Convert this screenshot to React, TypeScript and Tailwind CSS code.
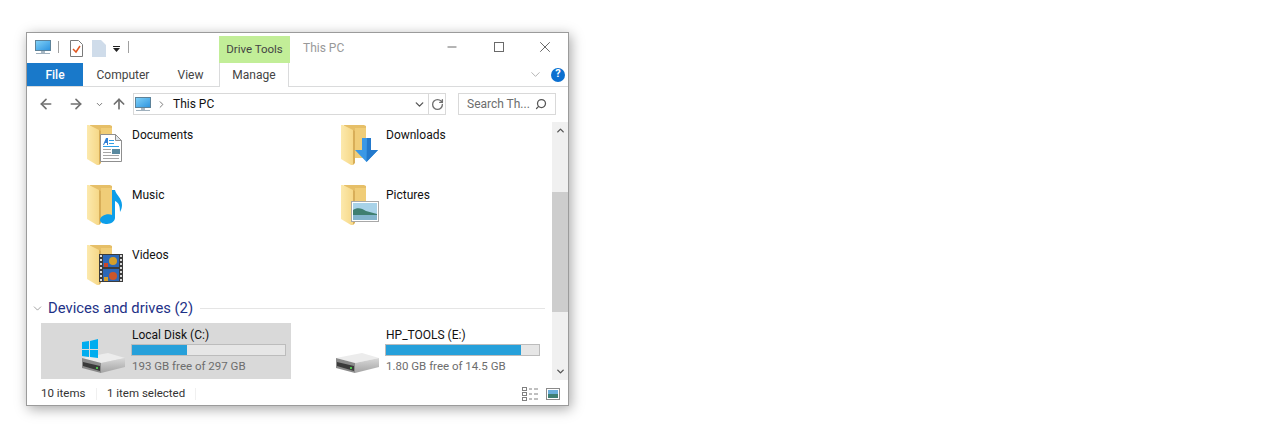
import { ChevronDown, ChevronUp, ChevronRight, ArrowLeft, ArrowRight, ArrowUp, RotateCw, Search, Minus, X } from 'lucide-react'
import type { ReactNode } from 'react'

function Monitor({ id }: { id: string }) {
  return (
    <svg width="16" height="15" viewBox="0 0 16 15" className="shrink-0">
      <defs>
        <linearGradient id={id} x1="0" y1="0" x2="1" y2="1">
          <stop offset="0" stopColor="#7fd0f7" />
          <stop offset="1" stopColor="#2f95e0" />
        </linearGradient>
      </defs>
      <rect x="0" y="0" width="16" height="11" fill="#5d8299" />
      <rect x="1" y="1" width="14" height="9" fill={`url(#${id})`} />
      <rect x="6" y="11" width="4" height="2" fill="#a9b8c4" />
      <rect x="1" y="13" width="14" height="1" fill="#9fb0bd" />
    </svg>
  )
}

function Folder({ children }: { children?: ReactNode }) {
  return (
    <svg width="44" height="44" viewBox="0 0 44 44" className="shrink-0">
      <defs>
        <linearGradient id="flap" x1="0" y1="0" x2="1" y2="0">
          <stop offset="0" stopColor="#fce9ad" />
          <stop offset="1" stopColor="#f6d888" />
        </linearGradient>
      </defs>
      <path d="M3 0h20l2 1v32H3z" fill="#e6bf68" />
      <path d="M14 3h11v30H14z" fill="#f0cd78" />
      <path d="M0 0h2l10 5v35l-2 0-10-6z" fill="url(#flap)" />
      <path d="M12 5v35l2-2V6z" fill="#d8ae58" />
      {children}
    </svg>
  )
}

function Documents() {
  return (
    <g>
      <path d="M13.500 9.500h15l6 6v21h-21z" fill="#fff" stroke="#8f8f8f" />
      <path d="M28.500 9.500v6h6z" fill="#dfe6ec" stroke="#8f8f8f" />
      <path d="M16 20l3-7h2v7h-1v-2h-2l-1 2z" fill="#2f7fd6" />
      <rect x="22" y="15" width="5" height="1" fill="#2e9fe6" />
      <rect x="22" y="18" width="5" height="1" fill="#2e9fe6" />
      <rect x="16" y="21" width="16" height="1" fill="#2e9fe6" />
      <rect x="16" y="24" width="8" height="1" fill="#a6a6a6" />
      <rect x="16" y="27" width="8" height="1" fill="#a6a6a6" />
      <rect x="16" y="30" width="16" height="1" fill="#a6a6a6" />
      <rect x="16" y="33" width="16" height="1" fill="#a6a6a6" />
      <rect x="25" y="24" width="8" height="5" fill="#5a8aa0" />
    </g>
  )
}

function Music() {
  return (
    <path
      d="M25 5h3c1 5 7 8 7 15 0 3-1 5-2 7 0-6-1-9-5-11v17c0 3-4 6-8 6-3 0-7-1-7-4 0-4 7-7 12-5z"
      fill="#0d9ee9"
    />
  )
}

function Down() {
  return (
    <g>
      <path d="M21 13h9v12h7L25.500 37 14 25h7z" fill="#3a98e6" />
      <path d="M26 13h4v12h7L25.500 37z" fill="#2379cc" />
    </g>
  )
}

function Picture() {
  return (
    <g>
      <rect x="10.500" y="16.500" width="27" height="20" fill="#fff" stroke="#a8a8a8" />
      <rect x="12" y="18" width="24" height="17" fill="#a8d2e8" />
      <path d="M12 25c4-3 9-2 13 1l11 3v2H12z" fill="#3f7f70" />
      <path d="M12 30h24v5H12z" fill="#82b4cc" />
    </g>
  )
}

function Film() {
  return (
    <g>
      <rect x="12" y="9" width="24" height="28" fill="#3c3c3c" />
      {[10, 14, 18, 22, 26, 30, 34].map((y) => (
        <g key={y}>
          <rect x="13" y={y} width="2" height="2" fill="#d8d8d8" />
          <rect x="33" y={y} width="2" height="2" fill="#d8d8d8" />
        </g>
      ))}
      <rect x="16" y="10" width="16" height="12" fill="#2c68b8" />
      <rect x="16" y="24" width="16" height="12" fill="#2c68b8" />
      <circle cx="26" cy="16" r="4" fill="#d6a02a" />
      <circle cx="26" cy="31" r="4" fill="#c9562a" />
      <rect x="17" y="18" width="4" height="4" fill="#c9462a" />
      <rect x="17" y="32" width="4" height="4" fill="#d6a02a" />
    </g>
  )
}

function Drive({ windows, id }: { windows?: boolean; id: string }) {
  return (
    <svg width="46" height="36" viewBox="0 0 46 36" className="shrink-0">
      <defs>
        <linearGradient id={id} x1="0" y1="0" x2="0" y2="1">
          <stop offset="0" stopColor="#d8d8d8" />
          <stop offset="1" stopColor="#a4a4a4" />
        </linearGradient>
      </defs>
      <path d="M1 19l26-5 17 5-24 5z" fill="#ececec" />
      <path d="M20 24l24-5v9l-24 6z" fill={`url(#${id})`} />
      <path d="M1 19l19 5v10L1 29z" fill="#8a8a8a" />
      <path d="M2 23l17 4v5L2 27z" fill="#3a3a3a" />
      <rect x="15" y="28" width="2" height="2" fill="#4fc24f" />
      {windows && (
        <g fill="#00adef">
          <path d="M1 3l7-1v8H1z" />
          <path d="M9 2l8-2v10H9z" />
          <path d="M1 11h7v7l-7-1z" />
          <path d="M9 11h8v8l-8-1z" />
        </g>
      )}
    </svg>
  )
}

function LibItem({ label, children }: { label: string; children: ReactNode }) {
  return (
    <div className="flex h-[60px] w-[254px] items-start pl-[46px] pt-px">
      <Folder>{children}</Folder>
      <span className="ml-[1px] mt-[1px] text-[#111]">{label}</span>
    </div>
  )
}

function DriveTile({
  label,
  free,
  pct,
  selected,
  windows,
  id,
}: {
  label: string
  free: string
  pct: number
  selected?: boolean
  windows?: boolean
  id: string
}) {
  return (
    <div className={`flex h-[56px] w-[250px] items-start ${selected ? 'bg-[#d9d9d9]' : ''}`}>
      <div className="ml-[40px] mt-[16px] w-[49px]">
        <Drive windows={windows} id={id} />
      </div>
      <div className="ml-[1px] flex w-[155px] flex-col">
        <span className="ml-px mt-[3px] h-[18px] leading-[18px] text-[#111]">{label}</span>
        <div className="h-[12px] w-[155px] border border-[#bcbcbc] bg-[#e6e6e6]">
          <div className="h-full bg-[#26a0da]" style={{ width: `${pct}%` }} />
        </div>
        <span className="ml-px mt-[1px] text-[11.5px] leading-[18px] text-[#6d6d6d]">{free}</span>
      </div>
    </div>
  )
}

export default function App() {
  return (
    <div className="h-[447px] w-[1267px] overflow-hidden bg-white pl-[26px] pt-[32px] font-['Roboto',sans-serif] text-[12px]">
      <div className="flex h-[374px] w-[543px] flex-col border border-[#9b9b9b] bg-white shadow-[2px_3px_12px_rgba(0,0,0,0.35)]">
        {/* title bar */}
        <div className="flex h-[30px] shrink-0 items-start">
          <div className="ml-[8px] mt-[7px] flex items-start">
            <Monitor id="scr1" />
            <span className="ml-[7px] mt-[1px] h-[12px] w-px bg-[#a0a0a0]" />
            <svg width="13" height="17" viewBox="0 0 13 17" className="ml-[11px]">
              <path d="M0.500 0.500h8l4 4v12h-12z" fill="#fff" stroke="#7a7a7a" />
              <path d="M3 9l3 3 4-6" fill="none" stroke="#e0561f" strokeWidth="1.500" />
            </svg>
            <svg width="14" height="17" viewBox="0 0 14 17" className="ml-[9px]">
              <path d="M0 0h9l5 5v12H0z" fill="#cfdcea" />
            </svg>
            <svg width="8" height="7" viewBox="0 0 8 7" className="ml-[7px] mt-[6px]">
              <rect y="0" width="7" height="1" fill="#222" />
              <path d="M0 2h7L3.500 6z" fill="#222" />
            </svg>
            <span className="ml-[7px] mt-[1px] h-[12px] w-px bg-[#a0a0a0]" />
          </div>
          <div className="ml-[90px] mt-[3px] flex h-[27px] w-[71px] items-center justify-center bg-[#c2ee98] pt-px text-[11.5px] text-[#444]">
            Drive Tools
          </div>
          <span className="ml-[13px] mt-[6px] text-[#999]">This PC</span>
          <div className="ml-auto flex items-start text-[#6a6a6a]">
            <div className="mr-[23px] mt-[7px] flex w-[24px] justify-center">
              <Minus size={14} strokeWidth={1} absoluteStrokeWidth />
            </div>
            <div className="mr-[22px] mt-[9px] flex w-[24px] justify-center">
              <div className="h-[10px] w-[10px] border border-[#6a6a6a]" />
            </div>
            <div className="mr-[11px] mt-[5px] flex w-[24px] justify-center">
              <X size={18} strokeWidth={1} absoluteStrokeWidth />
            </div>
          </div>
        </div>

        {/* ribbon tabs */}
        <div className="flex h-[24px] shrink-0 items-stretch border-b border-[#dadbdc]">
          <div className="flex w-[56px] items-center justify-center bg-[#1979ca] font-medium text-white">File</div>
          <div className="flex w-[80px] items-center justify-center text-[#444]">Computer</div>
          <div className="flex w-[53px] items-center justify-center pl-[2px] text-[#444]">View</div>
          <div className="-mb-px ml-[3px] flex w-[70px] items-center justify-center border-x border-[#dadbdc] bg-white text-[#444]">
            Manage
          </div>
          <div className="ml-auto mr-[3px] flex items-center gap-[8px]">
            <ChevronDown size={15} strokeWidth={1} className="text-[#888]" />
            <div className="flex h-[14px] w-[14px] items-center justify-center rounded-full bg-[#0a6fd0] text-[11px] font-bold text-white">
              ?
            </div>
          </div>
        </div>

        {/* address row */}
        <div className="flex h-[35px] shrink-0 items-center pb-[1px] text-[#707070]">
          <ArrowLeft size={16} strokeWidth={2.500} className="ml-[11px]" />
          <ArrowRight size={16} strokeWidth={2.500} className="ml-[14px]" />
          <ChevronDown size={9} strokeWidth={2.500} className="ml-[11px]" />
          <ArrowUp size={16} strokeWidth={2.500} className="ml-[7px]" />
          <div className="ml-[6px] flex h-[22px] w-[313px] items-center border border-[#d9d9d9] pl-px">
            <Monitor id="scr2" />
            <ChevronRight size={11} strokeWidth={2} className="ml-[5px]" />
            <span className="ml-[6px] text-[#111]">This PC</span>
            <ChevronDown size={13} strokeWidth={2.500} className="ml-auto mr-[2px] text-[#555]" />
            <div className="flex h-full w-[17px] items-center justify-center border-l border-[#d9d9d9]">
              <RotateCw size={13} strokeWidth={2.500} />
            </div>
          </div>
          <div className="ml-[12px] flex h-[22px] w-[98px] items-center justify-between border border-[#d9d9d9] pl-[8px] pr-[8px] text-[#6d6d6d]">
            <span>Search Th...</span>
            <Search size={12} strokeWidth={2.500} className="-scale-x-100 text-[#555]" />
          </div>
        </div>

        {/* content */}
        <div className="flex min-h-0 flex-1">
          <div className="min-w-0 flex-1 overflow-hidden pl-[14px] pt-[2px]">
            <div className="flex flex-wrap">
              <LibItem label="Documents"><Documents /></LibItem>
              <LibItem label="Downloads"><Down /></LibItem>
              <LibItem label="Music"><Music /></LibItem>
              <LibItem label="Pictures"><Picture /></LibItem>
              <LibItem label="Videos"><Film /></LibItem>
            </div>
            <div className="-ml-[10px] -mt-[6px] flex h-[20px] items-center">
              <ChevronDown size={13} strokeWidth={1} className="text-[#555]" />
              <span className="ml-[4px] whitespace-nowrap text-[14.8px] text-[#1e3287]">Devices and drives (2)</span>
              <span className="ml-[7px] mr-[7px] h-px flex-1 bg-[#e5e5e5]" />
            </div>
            <div className="mt-[5px] flex gap-[4px]">
              <DriveTile label="Local Disk (C:)" free="193 GB free of 297 GB" pct={36} selected windows id="dr1" />
              <DriveTile label="HP_TOOLS (E:)" free="1.80 GB free of 14.5 GB" pct={88} id="dr2" />
            </div>
          </div>
          <div className="flex w-[16px] shrink-0 flex-col bg-[#f0f0f0] text-[#555]">
            <div className="flex h-[17px] items-center justify-center">
              <ChevronUp size={11} strokeWidth={3} />
            </div>
            <div className="mt-[53px] h-[120px] bg-[#cdcdcd]" />
            <div className="mt-auto flex h-[17px] items-center justify-center">
              <ChevronDown size={11} strokeWidth={3} />
            </div>
          </div>
        </div>

        {/* status bar */}
        <div className="flex h-[25px] shrink-0 items-center pl-[14px] pt-[3px] text-[11.5px] text-[#333]">
          <span className="w-[55px]">10 items</span>
          <span className="h-[12px] w-px bg-[#f0f0f0]" />
          <span className="ml-[10px] w-[88px]">1 item selected</span>
          <span className="h-[12px] w-px bg-[#f0f0f0]" />
          <div className="ml-auto mr-[8px] flex items-center gap-[7px]">
            <svg width="17" height="14" viewBox="0 0 17 14">
              <g fill="none" stroke="#808080">
                <rect x="0.500" y="0.500" width="4" height="3" />
                <rect x="0.500" y="5.500" width="4" height="3" />
                <rect x="0.500" y="10.500" width="4" height="3" />
                <path d="M7 2h3M12 2h4M7 7h3M12 7h4M7 12h3M12 12h4" />
              </g>
            </svg>
            <svg width="14" height="12" viewBox="0 0 14 12">
              <rect x="0.500" y="0.500" width="13" height="11" fill="#fff" stroke="#8a8a8a" />
              <rect x="2" y="2" width="10" height="4" fill="#6aaedb" />
              <rect x="2" y="6" width="10" height="4" fill="#3e7f73" />
            </svg>
          </div>
        </div>
      </div>
    </div>
  )
}
